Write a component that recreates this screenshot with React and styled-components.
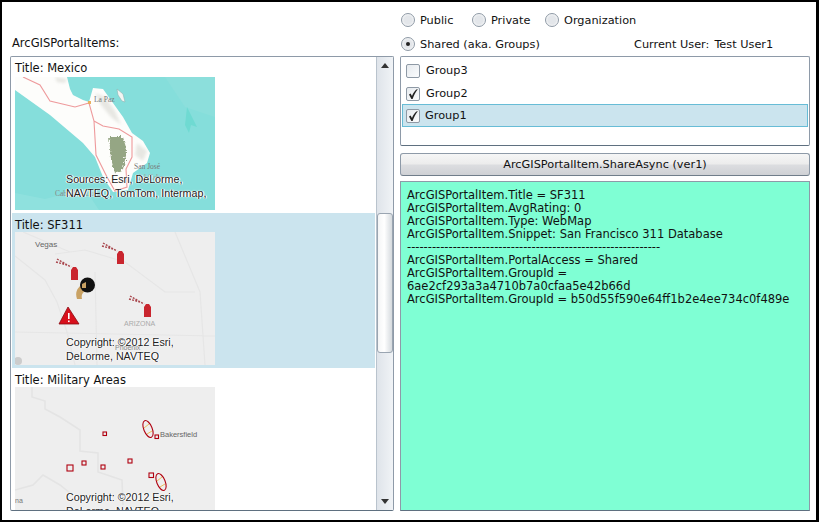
import React from "react";
import styled, { createGlobalStyle } from "styled-components";

const GlobalStyle = createGlobalStyle`
  html, body { margin: 0; padding: 0; background: #fff; }
  body { font-family: "DejaVu Sans", sans-serif; color: #111; }
  * { box-sizing: border-box; }
`;

const Window = styled.div`
  width: 819px;
  height: 522px;
  border: solid #000;
  border-width: 2px 3px 2px 2px;
  background: #fff;
  display: grid;
  grid-template-columns: 384px 410px;
  column-gap: 6px;
  padding: 0 0 9px 8px;
  font-size: 11.3px;
  overflow: hidden;
`;

const LeftColumn = styled.div`
  display: flex;
  flex-direction: column;
  min-height: 0;
`;

const ListLabel = styled.div`
  margin: 33px 0 0 2px;
  height: 21px;
  line-height: 17px;
  font-size: 11.5px;
`;

const ListBox = styled.div`
  flex: 1;
  min-height: 0;
  display: flex;
  border: 1px solid #8e9aa8;
  border-bottom-color: #5f7080;
  border-radius: 2px;
`;

const ListViewport = styled.div`
  flex: 1;
  min-width: 0;
  overflow: hidden;
  padding: 1px 1px 0 1px;
`;

const Item = styled.div`
  height: 155px;
  flex: none;
  padding: 0 3px;
  background: ${(p) => (p.$selected ? "#cbe4ee" : "transparent")};
`;

const ItemTitle = styled.div`
  height: 19px;
  line-height: ${(p) => p.$line}px;
  font-size: 11.5px;
`;

const Thumb = styled.div`
  position: relative;
  width: 200px;
  height: 133px;
  background: ${(p) => p.$bg};
  svg { display: block; }
`;

const Credit = styled.div`
  position: absolute;
  left: 51px;
  top: ${(p) => p.$top}px;
  font-family: "Liberation Sans", Arial, sans-serif;
  font-size: 10.7px;
  line-height: 14px;
  white-space: nowrap;
  color: #222;
  text-shadow: 0 0 1px #fff, 0 0 2px #fff, 1px 0 0 #fff, -1px 0 0 #fff;
`;

const ScrollBar = styled.div`
  width: 17px;
  flex: none;
  display: flex;
  flex-direction: column;
  align-items: stretch;
  border-left: 1px solid #b9c3cd;
  background: linear-gradient(90deg, #dfe4ea, #f0f3f6);
`;

const ScrollArrow = styled.div`
  height: 17px;
  display: flex;
  align-items: center;
  justify-content: center;
  svg { display: block; }
`;

const ScrollSpacer = styled.div`
  flex: ${(p) => p.$grow};
`;

const ScrollThumb = styled.div`
  height: 140px;
  border: 1px solid #9aa5b1;
  border-radius: 3px;
  background: linear-gradient(90deg, #f4f5f6, #fff 45%, #d5dade);
`;

const RightColumn = styled.div`
  display: flex;
  flex-direction: column;
  min-height: 0;
`;

const RadioRow = styled.div`
  display: flex;
  align-items: center;
  height: 24px;
  padding-left: 1px;
`;

const TopRadios = styled(RadioRow)`
  margin-top: 6px;
`;

const Radio = styled.label`
  display: flex;
  align-items: center;
  gap: 5px;
  width: ${(p) => p.$width || "auto"};
`;

const RadioDot = styled.span`
  width: 14px;
  height: 14px;
  flex: none;
  border-radius: 50%;
  border: 1px solid #8e99a5;
  background: radial-gradient(circle at 50% 50%, #e3e6ea 0 45%, #f6f7f8 75%);
  display: flex;
  align-items: center;
  justify-content: center;
  &::after {
    content: "";
    width: 4px;
    height: 4px;
    border-radius: 50%;
    background: ${(p) => (p.$on ? "#222" : "transparent")};
  }
`;

const CurrentUser = styled.div`
  display: flex;
  gap: 5px;
`;

const GroupBox = styled.div`
  height: 90px;
  border: 1px solid #8e9aa8;
  border-bottom-color: #5f7080;
  border-radius: 2px;
  padding: 2px 1px;
  margin-bottom: 7px;
`;

const GroupRow = styled.div`
  height: 23px;
  display: flex;
  align-items: center;
  gap: ${(p) => (p.$selected ? "5px" : "6px")};
  padding-left: 3px;
  margin-top: ${(p) => (p.$selected ? "-1px" : "0")};
  background: ${(p) => (p.$selected ? "#cbe4ee" : "transparent")};
  border: 1px solid ${(p) => (p.$selected ? "#67bcd6" : "transparent")};
`;

const CheckBox = styled.span`
  width: 14px;
  height: 14px;
  flex: none;
  border: 1px solid #8e99a5;
  border-radius: 2px;
  background: linear-gradient(135deg, #e6eaee, #fbfcfd);
  display: flex;
  align-items: center;
  justify-content: center;
  svg { display: block; }
`;

const ShareButton = styled.div`
  height: 23px;
  flex: none;
  display: flex;
  align-items: center;
  justify-content: center;
  border: 1px solid #8e9aa8;
  border-bottom-color: #707d8a;
  border-radius: 3px;
  background: linear-gradient(#f6f6f6 0, #ececec 48%, #dcdde0 52%, #cfd1d5 100%);
  margin-bottom: 5px;
`;

const OutputPanel = styled.div`
  flex: 1;
  min-height: 0;
  background: #7fffd4;
  border: 1px solid #8e9aa8;
  border-bottom-color: #5f7080;
  padding: 7px 6px 6px;
  font-size: 11.5px;
  line-height: 13px;
  white-space: pre-wrap;
  overflow: hidden;
`;

const MapLabel = styled.text`
  font-family: ${(p) => (p.$serif ? '"Liberation Serif", serif' : '"Liberation Sans", sans-serif')};
  font-size: ${(p) => p.$size || 8}px;
  fill: ${(p) => p.$color || "#777"};
`;

const MexicoMap = () => (
  <svg width="200" height="133" viewBox="0 0 200 133">
    <defs>
      <filter id="soft" x="-30%" y="-30%" width="160%" height="160%">
        <feGaussianBlur stdDeviation="1.6" />
      </filter>
      <filter id="rough" x="-20%" y="-20%" width="140%" height="140%">
        <feTurbulence type="fractalNoise" baseFrequency="0.45" numOctaves="2" seed="4" result="n" />
        <feDisplacementMap in="SourceGraphic" in2="n" scale="7" />
      </filter>
    </defs>
    <rect width="200" height="133" fill="#85dedb" />
    <path d="M0 116 L30 122 L70 112 L84 133 L0 133 Z" fill="#8fe1de" />
    <path d="M150 0 L200 0 L200 40 L170 30 Z" fill="#8cdfdc" />
    <path d="M172 30 L182 50 L176 48 L174 56 L170 48 Z" fill="#6fdad2" />
    <path d="M0 0 L52 0 L55 12 L58 18 L68 23 L74 25 L78 11 L88 12 L98 26 L108 40 L117 56 L128 64 L135 76 L132 86 L118 96 L113 113 L98 115 L88 100 L80 80 L68 66 L35 38 L0 13 Z" fill="#fdfdfb" />
    <path d="M102 12 L108 17 L110 25 L107 24 L103 18 Z" fill="#f4f5f2" stroke="#8aa" strokeWidth="0.5" />
    <path d="M40 0 L52 2 L50 6 L42 5 Z M80 16 L90 20 L100 34 L106 48 L96 40 L86 28 Z M122 66 L132 74 L128 84 L120 78 Z" fill="#dcdcd6" opacity="0.65" filter="url(#soft)" />
    <path d="M94 60 L108 60 L112 74 L108 92 L100 96 L96 82 Z" fill="#84976f" opacity="0.85" filter="url(#rough)" />
    <path d="M8 0 L25 8 L35 24 L60 30 L74 26 L79 44 L81 78 L92 100 L100 114 L112 110 L111 92 L117 80 L117 60 L104 52 L88 49 L79 44" fill="none" stroke="#ee9a9c" strokeWidth="1.1" />
    <rect x="73" y="24" width="3" height="3" fill="#e8b060" />
    <MapLabel x="79" y="25" $serif $size="7.5" $color="#777">La Paz</MapLabel>
    <MapLabel x="119" y="92" $serif $size="7.5" $color="#777">San José</MapLabel>
    <MapLabel x="122" y="103" $serif $size="7.5" $color="#999">del Cabo</MapLabel>
    <MapLabel x="40" y="119" $serif $size="7.5" $color="#888">Cabo San Lucas</MapLabel>
  </svg>
);

const Pin = ({ x, y }) => (
  <g transform={`translate(${x} ${y})`}>
    <path d="M0 3 L2 0 L5 0 L7 3 L7 13 L0 13 Z" fill="#c9252e" />
    <path d="M-14 -8 L0 0 M-15 -5 L-4 -2" stroke="#a8454c" strokeWidth="1.4" strokeDasharray="2 1.2" fill="none" />
  </g>
);

const SfMap = () => (
  <svg width="200" height="133" viewBox="0 0 200 133">
    <path d="M0 24 L30 48 L42 70 L52 100 L60 133 M8 0 L55 20 M40 22 L70 18 L110 30 L150 60 L180 60 M160 0 L185 60 L190 133 M80 40 L82 133 M0 100 L200 104" stroke="#e6e6e6" strokeWidth="1.2" fill="none" />
    <MapLabel x="20" y="15" $size="8" $color="#666">Vegas</MapLabel>
    <Pin x={102} y={19} />
    <Pin x={56} y={35} />
    <Pin x={129} y={72} />
    <path d="M66 53 C62 57 60 60 62 67 L67 67 C66 62 68 60 72 58 Z" fill="#c9a264" />
    <circle cx="72.5" cy="53" r="7.5" fill="#111" />
    <path d="M67 52 L71 50 L71 56 L67 56 Z" fill="#c9a264" />
    <path d="M53 75 L64 92 L44 92 Z" fill="#d8101c" stroke="#8a0a10" strokeWidth="0.8" />
    <rect x="53" y="81" width="1.6" height="6" fill="#fff" />
    <rect x="53" y="88.5" width="1.6" height="1.6" fill="#fff" />
    <MapLabel x="109" y="94" $size="7" $color="#aaa">ARIZONA</MapLabel>
    <MapLabel x="100" y="118" $size="7" $color="#888">Phoenix</MapLabel>
    <circle cx="3" cy="129" r="4" fill="#ccc" />
  </svg>
);

const MILITARY_SQUARES = [
  [88, 45, 3.5],
  [140, 48, 3.5],
  [67, 74, 4],
  [52, 78, 6],
  [86, 78, 4],
  [113, 72, 4],
  [134, 86, 4.5],
];

const MilitaryMap = () => (
  <svg width="200" height="133" viewBox="0 0 200 133">
    <path d="M17 0 L17 10 L30 14 L30 22 L45 30 L65 43 L65 64 L83 66 L83 85 L98 90 L107 93 L108 118 M0 103 L18 98 L28 88 L45 98 L55 106" stroke="#e4e4e4" strokeWidth="1.6" fill="none" />
    {MILITARY_SQUARES.map(([x, y, s]) => (
      <rect key={`${x}-${y}`} x={x} y={y} width={s} height={s} fill="none" stroke="#b00010" strokeWidth="1.1" />
    ))}
    {[[133, 42], [146, 95]].map(([x, y]) => (
      <g key={x} transform={`rotate(-22 ${x} ${y})`}>
        <ellipse cx={x} cy={y} rx="4.2" ry="9" fill="none" stroke="#b00010" strokeWidth="1.1" />
        <path d={`M${x - 4} ${y - 1} L${x + 1} ${y - 5} M${x - 1} ${y + 5} L${x + 4} ${y + 2}`} stroke="#eba820" strokeWidth="0.7" transform={`rotate(22 ${x} ${y})`} />
      </g>
    ))}
    <MapLabel x="145" y="50" $size="7.5" $color="#666">Bakersfield</MapLabel>
    <MapLabel x="0" y="116" $size="7" $color="#777">na</MapLabel>
  </svg>
);

const Check = () => (
  <svg width="12" height="12" viewBox="0 0 12 12">
    <path d="M2 6.5 L3.6 5.4 L5 8 C6.2 5 7.8 2.6 10.2 1 L10.6 1.4 C8.6 4 7 7 5.6 11 L4.4 11 Z" fill="#222" />
  </svg>
);

const OUTPUT = `ArcGISPortalItem.Title = SF311
ArcGISPortalItem.AvgRating: 0
ArcGISPortalItem.Type: WebMap
ArcGISPortalItem.Snippet: San Francisco 311 Database
-------------------------------------------------------------
ArcGISPortalItem.PortalAccess = Shared
ArcGISPortalItem.GroupId =
6ae2cf293a3a4710b7a0cfaa5e42b66d
ArcGISPortalItem.GroupId = b50d55f590e64ff1b2e4ee734c0f489e`;

export default function App() {
  return (
    <>
      <GlobalStyle />
      <Window>
        <LeftColumn>
          <ListLabel>ArcGISPortalItems:</ListLabel>
          <ListBox>
            <ListViewport>
              <Item>
                <ItemTitle $line={21}>Title: Mexico</ItemTitle>
                <Thumb $bg="#85dedb">
                  <MexicoMap />
                  <Credit $top={95}>Sources: Esri, DeLorme,<br />NAVTEQ, TomTom, Intermap,</Credit>
                </Thumb>
              </Item>
              <Item $selected>
                <ItemTitle $line={24}>Title: SF311</ItemTitle>
                <Thumb $bg="#eeeeee">
                  <SfMap />
                  <Credit $top={103}>Copyright: ©2012 Esri,<br />DeLorme, NAVTEQ</Credit>
                </Thumb>
              </Item>
              <Item>
                <ItemTitle $line={24}>Title: Military Areas</ItemTitle>
                <Thumb $bg="#eeeeee">
                  <MilitaryMap />
                  <Credit $top={103}>Copyright: ©2012 Esri,<br />DeLorme, NAVTEQ</Credit>
                </Thumb>
              </Item>
            </ListViewport>
            <ScrollBar>
              <ScrollArrow>
                <svg width="8" height="5" viewBox="0 0 8 5"><path d="M4 0 L8 5 L0 5 Z" fill="#333" /></svg>
              </ScrollArrow>
              <ScrollSpacer $grow={139} />
              <ScrollThumb />
              <ScrollSpacer $grow={140} />
              <ScrollArrow>
                <svg width="8" height="5" viewBox="0 0 8 5"><path d="M0 0 L8 0 L4 5 Z" fill="#333" /></svg>
              </ScrollArrow>
            </ScrollBar>
          </ListBox>
        </LeftColumn>
        <RightColumn>
          <TopRadios>
            <Radio $width="71px"><RadioDot />Public</Radio>
            <Radio $width="73px"><RadioDot />Private</Radio>
            <Radio><RadioDot />Organization</Radio>
          </TopRadios>
          <RadioRow>
            <Radio $width="233px"><RadioDot $on />Shared (aka. Groups)</Radio>
            <CurrentUser><span>Current User:</span><span>Test User1</span></CurrentUser>
          </RadioRow>
          <GroupBox>
            <GroupRow><CheckBox />Group3</GroupRow>
            <GroupRow><CheckBox><Check /></CheckBox>Group2</GroupRow>
            <GroupRow $selected><CheckBox><Check /></CheckBox>Group1</GroupRow>
          </GroupBox>
          <ShareButton>ArcGISPortalItem.ShareAsync (ver1)</ShareButton>
          <OutputPanel>{OUTPUT}</OutputPanel>
        </RightColumn>
      </Window>
    </>
  );
}
